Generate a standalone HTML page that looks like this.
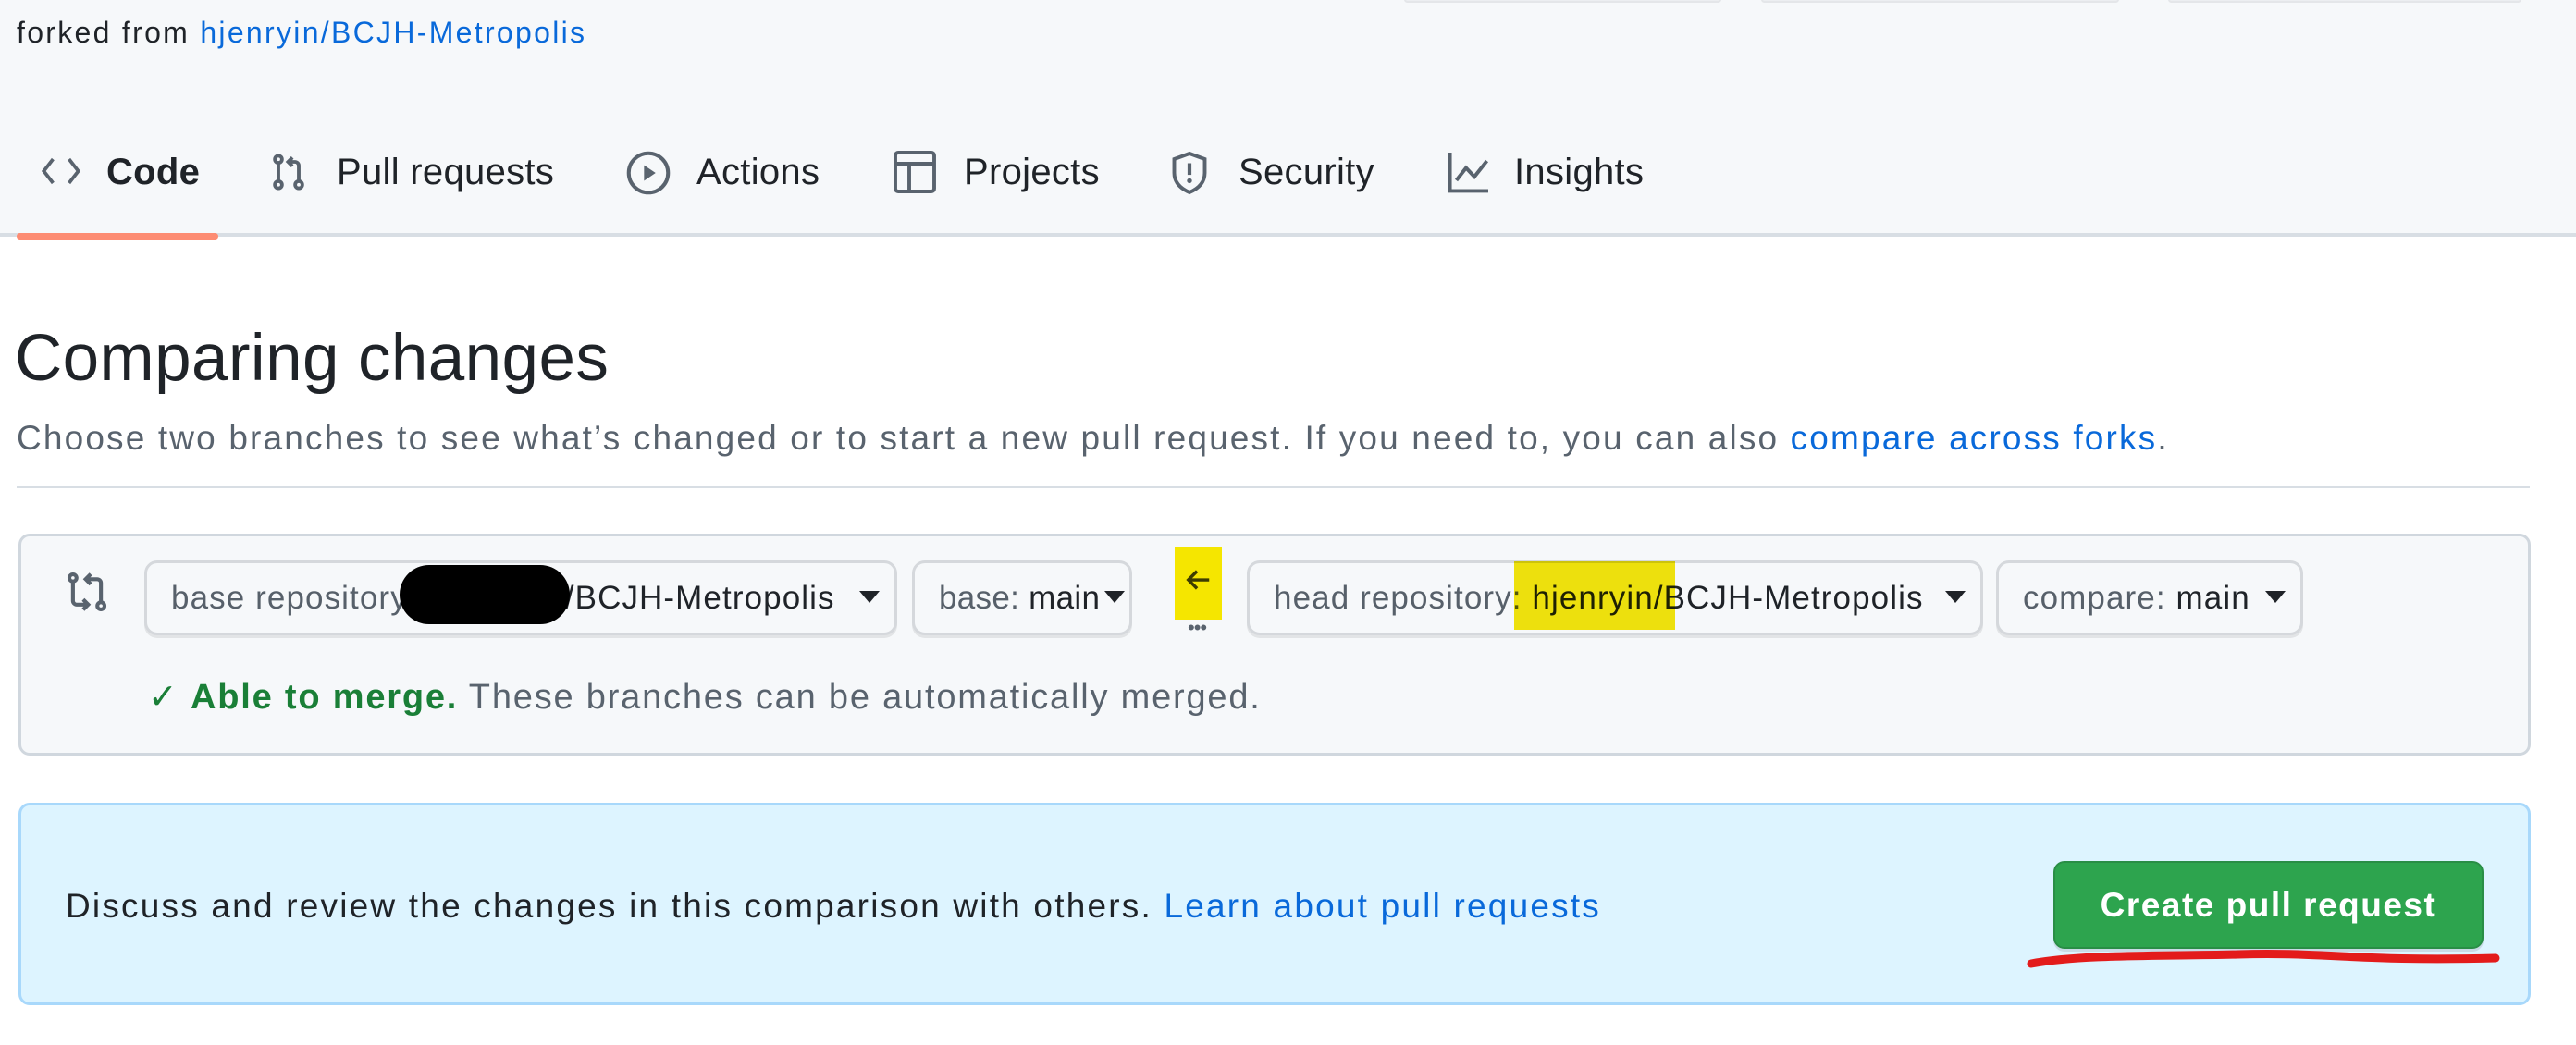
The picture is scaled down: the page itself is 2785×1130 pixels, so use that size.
<!DOCTYPE html>
<html><head><meta charset="utf-8"><style>
*{margin:0;padding:0;box-sizing:border-box}
body{width:2785px;height:1130px;background:#fff;font-family:"Liberation Sans",sans-serif;position:relative;overflow:hidden;color:#1f2328}
.a{position:absolute;white-space:nowrap}
.top{position:absolute;left:0;top:0;width:2785px;height:256px;background:#f6f8fa;border-bottom:4px solid #d8dee4}
.tab{position:absolute;top:163px;font-size:40px;line-height:46px;color:#1f2328;letter-spacing:.3px}
.ic{position:absolute;top:162px}
.btn{position:absolute;top:606px;height:81px;border:3px solid #d5d8dc;border-radius:14px;background:#f6f8fa;font-size:35px;line-height:75px;padding-left:26px;color:#57606a;box-shadow:0 3px 0 #e2e4e6;letter-spacing:1.1px}
.btn b{color:#1f2328;font-weight:normal}
.caret{position:absolute;top:30px;width:0;height:0;border-left:11px solid transparent;border-right:11px solid transparent;border-top:13px solid #1f2328}
</style></head><body>
<div class="top"></div>
<div class="a" style="left:1518px;top:-4px;width:343px;height:7px;border:2px solid #e4e6e9;border-radius:6px;background:#eceef1"></div>
<div class="a" style="left:1904px;top:-4px;width:387px;height:7px;border:2px solid #e4e6e9;border-radius:6px;background:#eceef1"></div>
<div class="a" style="left:2344px;top:-4px;width:382px;height:7px;border:2px solid #e4e6e9;border-radius:6px;background:#eceef1"></div>
<div class="a" style="left:18px;top:16px;font-size:32px;line-height:38px;letter-spacing:2.3px">forked from <span style="color:#0969da">hjenryin/BCJH-Metropolis</span></div>

<svg class="ic" style="left:42px" width="48" height="46" viewBox="0 0 16 16"><path d="M5 3.5 1.5 8 5 12.5M11 3.5 14.5 8 11 12.5" fill="none" stroke="#59636e" stroke-width="1.3"/></svg>
<div class="tab" style="left:115px;font-weight:bold">Code</div>
<svg class="ic" style="left:290px" width="44" height="48" viewBox="0 0 16 16"><g fill="none" stroke="#59636e" stroke-width="1.4"><circle cx="4" cy="3" r="1.4"/><circle cx="4" cy="13" r="1.4"/><circle cx="12" cy="13" r="1.4"/><path d="M4 4.4v7.2M12 11.6V5.5a1.5 1.5 0 0 0-1.5-1.5H8M9.5 2.3 7.8 4l1.7 1.7"/></g></svg>
<div class="tab" style="left:364px">Pull requests</div>
<svg class="ic" style="left:676px" width="50" height="50" viewBox="0 0 16 16"><circle cx="8" cy="8" r="6.8" fill="none" stroke="#59636e" stroke-width="1.3"/><path d="M6.5 5.3v5.4L10.5 8z" fill="#59636e"/></svg>
<div class="tab" style="left:753px">Actions</div>
<svg class="ic" style="left:964px" width="50" height="48" viewBox="0 0 16 16"><g fill="none" stroke="#59636e" stroke-width="1.3"><rect x="1" y="1" width="14" height="14" rx="1"/><path d="M1 5h14M6 5v10"/></g></svg>
<div class="tab" style="left:1042px">Projects</div>
<svg class="ic" style="left:1262px" width="48" height="50" viewBox="0 0 16 16"><path d="M8 1 2.5 3v5c0 3.5 2.5 5.7 5.5 7 3-1.3 5.5-3.5 5.5-7V3z" fill="none" stroke="#59636e" stroke-width="1.3"/><path d="M8 4.5v4.2" stroke="#59636e" stroke-width="1.4"/><circle cx="8" cy="10.8" r=".9" fill="#59636e"/></svg>
<div class="tab" style="left:1339px">Security</div>
<svg class="ic" style="left:1563px" width="50" height="48" viewBox="0 0 16 16"><path d="M1.2 1v13.8H15M3.5 11 7 6.5l3 3.2L14.5 4" fill="none" stroke="#59636e" stroke-width="1.3"/></svg>
<div class="tab" style="left:1637px">Insights</div>
<div class="a" style="left:18px;top:252px;width:218px;height:7px;background:#fd8c73;border-radius:4px"></div>

<div class="a" style="left:16px;top:343px;font-size:71px;line-height:90px;color:#1f2328;letter-spacing:.4px">Comparing changes</div>
<div class="a" style="left:18px;top:452px;font-size:37px;line-height:44px;color:#59636e;letter-spacing:2.15px">Choose two branches to see what’s changed or to start a new pull request. If you need to, you can also <span style="color:#0969da">compare across forks</span>.</div>
<div class="a" style="left:18px;top:525px;width:2717px;height:3px;background:#d8dee4"></div>

<div class="a" style="left:20px;top:577px;width:2716px;height:240px;background:#f6f8fa;border:3px solid #d0d7de;border-radius:12px"></div>
<svg class="a" style="left:72px;top:617px" width="44" height="46" viewBox="0 0 16 16"><g fill="none" stroke="#59636e" stroke-width="1.5"><circle cx="2.5" cy="2.5" r="1.4"/><circle cx="13.5" cy="13.5" r="1.4"/><path d="M2.5 3.9v7.6a1.5 1.5 0 0 0 1.5 1.5h4M6.5 11l2 2-2 2M13.5 12.1V4.5A1.5 1.5 0 0 0 12 3H8M9.5 1 7.5 3l2 2"/></g></svg>
<div class="btn" style="left:156px;width:814px">base repository<span style="display:inline-block;width:170px"></span><b>/BCJH-Metropolis</b><span class="caret" style="left:770px"></span></div>
<div class="a" style="left:432px;top:611px;width:184px;height:64px;background:#000;border-radius:32px"></div>
<div class="btn" style="left:986px;width:238px;letter-spacing:.3px">base: <b>main</b><span class="caret" style="left:205px"></span></div>
<div class="a" style="left:1270px;top:591px;width:51px;height:79px;background:#f5e600"></div>
<svg class="a" style="left:1280px;top:612px" width="32" height="30" viewBox="0 0 16 16"><path d="M14 8H2.5M7 3 2 8l5 5" fill="none" stroke="#3d3d00" stroke-width="1.8"/></svg>
<div class="a" style="left:1284px;top:666px;font-size:22px;color:#59636e;letter-spacing:-1px">•••</div>
<div class="btn" style="left:1348px;width:796px">head repository: <b>hjenryin/BCJH-Metropolis</b><span class="caret" style="left:752px"></span></div>
<div class="a" style="left:1637px;top:607px;width:174px;height:74px;background:rgba(245,230,0,.95);mix-blend-mode:multiply"></div>
<div class="btn" style="left:2158px;width:332px">compare: <b>main</b><span class="caret" style="left:288px"></span></div>
<div class="a" style="left:160px;top:732px;font-size:38px;line-height:44px;color:#59636e;letter-spacing:1.8px"><span style="color:#1a7f37">✓ <b>Able to merge.</b></span> These branches can be automatically merged.</div>

<div class="a" style="left:20px;top:868px;width:2716px;height:219px;background:#ddf4ff;border:3px solid #a8d8fb;border-radius:12px"></div>
<div class="a" style="left:71px;top:958px;font-size:37px;line-height:44px;color:#1f2328;letter-spacing:2.2px">Discuss and review the changes in this comparison with others. <span style="color:#0969da">Learn about pull requests</span></div>
<div class="a" style="left:2220px;top:931px;width:465px;height:95px;background:#2da44e;border:2px solid #298e46;border-radius:12px;color:#fff;font-weight:bold;font-size:37px;line-height:91px;text-align:center;box-shadow:0 3px 0 #c9dbe6;letter-spacing:1.5px">Create pull request</div>
<svg class="a" style="left:2190px;top:1024px" width="515" height="26" viewBox="0 0 515 26"><path d="M6 18C60 8 140 10 230 8 320 5 360 16 508 12" fill="none" stroke="#e31b1b" stroke-width="9" stroke-linecap="round"/></svg>
</body></html>
